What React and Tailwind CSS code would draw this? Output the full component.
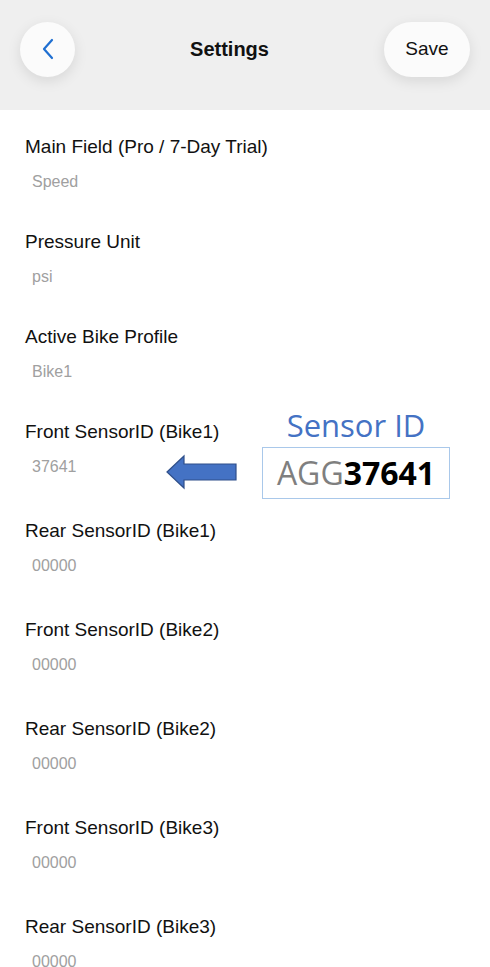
import React from "react";

const rows = [
  { label: "Main Field (Pro / 7-Day Trial)", value: "Speed", gap: "mb-[38px]" },
  { label: "Pressure Unit", value: "psi", gap: "mb-[38px]" },
  { label: "Active Bike Profile", value: "Bike1", gap: "mb-[38px]" },
  { label: "Front SensorID (Bike1)", value: "37641", gap: "mb-[42px]" },
  { label: "Rear SensorID (Bike1)", value: "00000", gap: "mb-[42px]" },
  { label: "Front SensorID (Bike2)", value: "00000", gap: "mb-[42px]" },
  { label: "Rear SensorID (Bike2)", value: "00000", gap: "mb-[42px]" },
  { label: "Front SensorID (Bike3)", value: "00000", gap: "mb-[42px]" },
  { label: "Rear SensorID (Bike3)", value: "00000", gap: "mb-[42px]" },
];

const SensorNote = () => (
  <div className="absolute left-[166px] top-[406px] flex items-end gap-[24px]">
    <svg width="72" height="36" viewBox="0 0 72 36" className="mb-[9px]">
      <path
        d="M1 18 L18 2 L18 10 L70 10 L70 26 L18 26 L18 34 Z"
        fill="#4472c4"
        stroke="#2f4f8a"
        strokeWidth="1.2"
      />
    </svg>
    <div className="flex flex-col items-center">
      <div className="text-[31px] leading-[38px] text-[#4472c4] font-['Open_Sans',sans-serif]">
        Sensor ID
      </div>
      <div className="mt-[3px] w-[188px] h-[52px] border-[1.5px] border-[#a9c8ea] flex items-center justify-center text-[32px] font-['Open_Sans',sans-serif]">
        <span className="text-[#7f7f7f]">AGG</span>
        <span className="font-bold text-black">37641</span>
      </div>
    </div>
  </div>
);

export default function App() {
  return (
    <div className="relative w-[490px] h-[967px] overflow-hidden bg-white font-['Liberation_Sans',Arial,sans-serif]">
      <div className="h-[110px] bg-[#efefef] flex items-center justify-between px-[20px] pb-[12px]">
        <button className="w-[55px] h-[55px] rounded-full bg-[#fbfbfb] shadow-[0_4px_14px_rgba(0,0,0,0.10)] flex items-center justify-center">
          <svg width="14" height="22" viewBox="0 0 14 22">
            <path
              d="M11 2 L3 11 L11 20"
              fill="none"
              stroke="#1f6fd1"
              strokeWidth="2.2"
              strokeLinecap="round"
              strokeLinejoin="round"
            />
          </svg>
        </button>
        <div className="text-[20px] font-bold text-[#111]">Settings</div>
        <button className="w-[86px] h-[55px] rounded-full bg-[#fbfbfb] shadow-[0_4px_14px_rgba(0,0,0,0.10)] text-[19px] text-[#111]">
          Save
        </button>
      </div>

      <div className="pt-[25px] pl-[25px]">
        {rows.map((r) => (
          <div key={r.label} className={r.gap}>
            <div className="text-[19px] leading-[24px] text-[#111]">{r.label}</div>
            <div className="mt-[13px] pl-[7px] text-[16px] leading-[20px] text-[#a0a0a0]">
              {r.value}
            </div>
          </div>
        ))}
      </div>

      <SensorNote />
    </div>
  );
}
